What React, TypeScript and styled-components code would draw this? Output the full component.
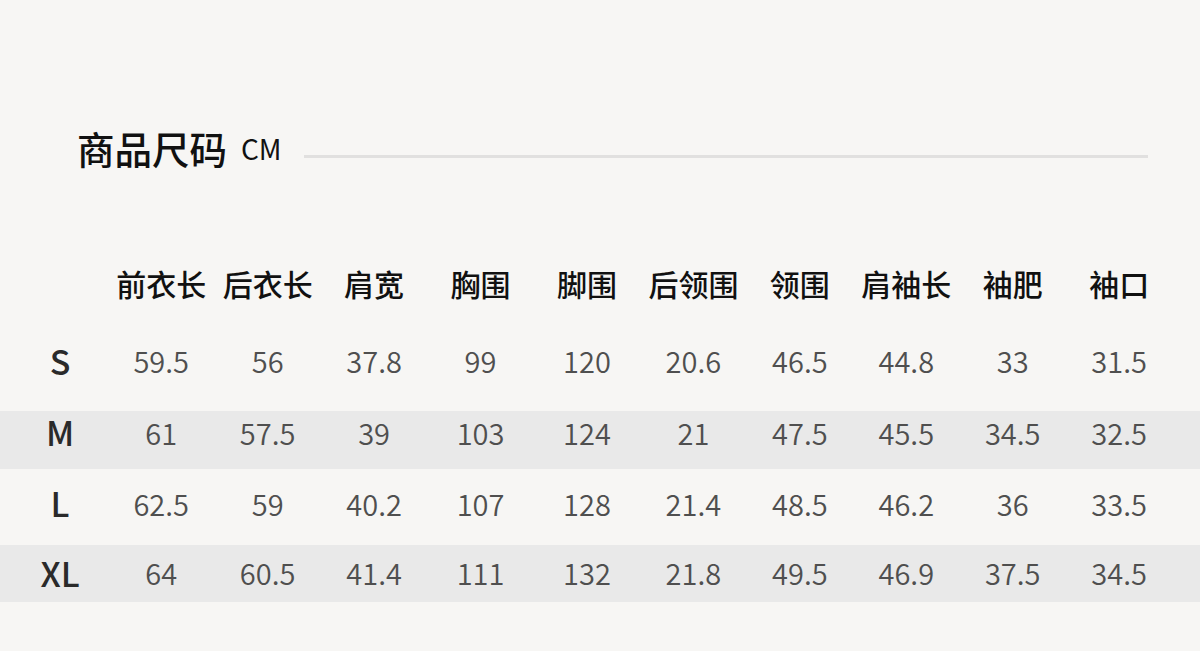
import React from "react";
import styled, { createGlobalStyle } from "styled-components";

const Global = createGlobalStyle`
  *, *::before, *::after { box-sizing: border-box; }
  html, body { margin: 0; padding: 0; background: #f7f6f4; }
  body { font-family: "Noto Sans CJK SC", "Noto Sans", sans-serif; }
`;

const Page = styled.div`
  width: 1200px;
  height: 651px;
  background: #f7f6f4;
  padding-top: 128px;
  overflow: hidden;
`;

const TitleRow = styled.div`
  display: flex;
  align-items: center;
  height: 40px;
  padding-left: 77px;
  padding-right: 52px;
`;

const Title = styled.h1`
  margin: 0;
  font-size: 37.5px;
  line-height: 36px;
  font-weight: 500;
  color: #111;
`;

const Unit = styled.span`
  margin-left: 14px;
  font-size: 28px;
  line-height: 36px;
  font-weight: 400;
  color: #111;
`;

const Rule = styled.div`
  flex: 1;
  height: 3px;
  margin-left: 22px;
  margin-top: 16px;
  background: #e1e0df;
`;

const Table = styled.div`
  margin-top: 86px;
  display: flex;
  flex-direction: column;
`;

const Row = styled.div<{ $h: number; $lift: number; $striped?: boolean }>`
  display: grid;
  grid-template-columns: 96px repeat(10, 106.44px);
  align-items: center;
  padding-left: 12px;
  height: ${(p) => p.$h}px;
  padding-bottom: ${(p) => p.$lift * 2}px;
  background: ${(p) => (p.$striped ? "#e9e9e9" : "transparent")};
`;

const HeadCell = styled.div`
  text-align: center;
  font-size: 30px;
  line-height: 30px;
  font-weight: 500;
  color: #111;
  white-space: nowrap;
`;

const SizeCell = styled.div`
  text-align: center;
  font-size: 34px;
  line-height: 34px;
  font-weight: 500;
  color: #2a2a2a;
`;

const ValueCell = styled.div`
  text-align: center;
  font-size: 29px;
  line-height: 29px;
  font-weight: 350;
  color: #4f4f4f;
`;

const headers = ["前衣长", "后衣长", "肩宽", "胸围", "脚围", "后领围", "领围", "肩袖长", "袖肥", "袖口"];

const rows = [
  { size: "S", h: 97, lift: 2, striped: false, values: ["59.5", "56", "37.8", "99", "120", "20.6", "46.5", "44.8", "33", "31.5"] },
  { size: "M", h: 58, lift: 8, striped: true, values: ["61", "57.5", "39", "103", "124", "21", "47.5", "45.5", "34.5", "32.5"] },
  { size: "L", h: 76, lift: 4, striped: false, values: ["62.5", "59", "40.2", "107", "128", "21.4", "48.5", "46.2", "36", "33.5"] },
  { size: "XL", h: 57, lift: 1, striped: true, values: ["64", "60.5", "41.4", "111", "132", "21.8", "49.5", "46.9", "37.5", "34.5"] },
];

export default function App() {
  return (
    <Page>
      <Global />
      <TitleRow>
        <Title>商品尺码</Title>
        <Unit>CM</Unit>
        <Rule />
      </TitleRow>
      <Table>
        <Row $h={60} $lift={1}>
          <div />
          {headers.map((h) => (
            <HeadCell key={h}>{h}</HeadCell>
          ))}
        </Row>
        {rows.map((r) => (
          <Row key={r.size} $h={r.h} $lift={r.lift} $striped={r.striped}>
            <SizeCell>{r.size}</SizeCell>
            {r.values.map((v, i) => (
              <ValueCell key={i}>{v}</ValueCell>
            ))}
          </Row>
        ))}
      </Table>
    </Page>
  );
}
